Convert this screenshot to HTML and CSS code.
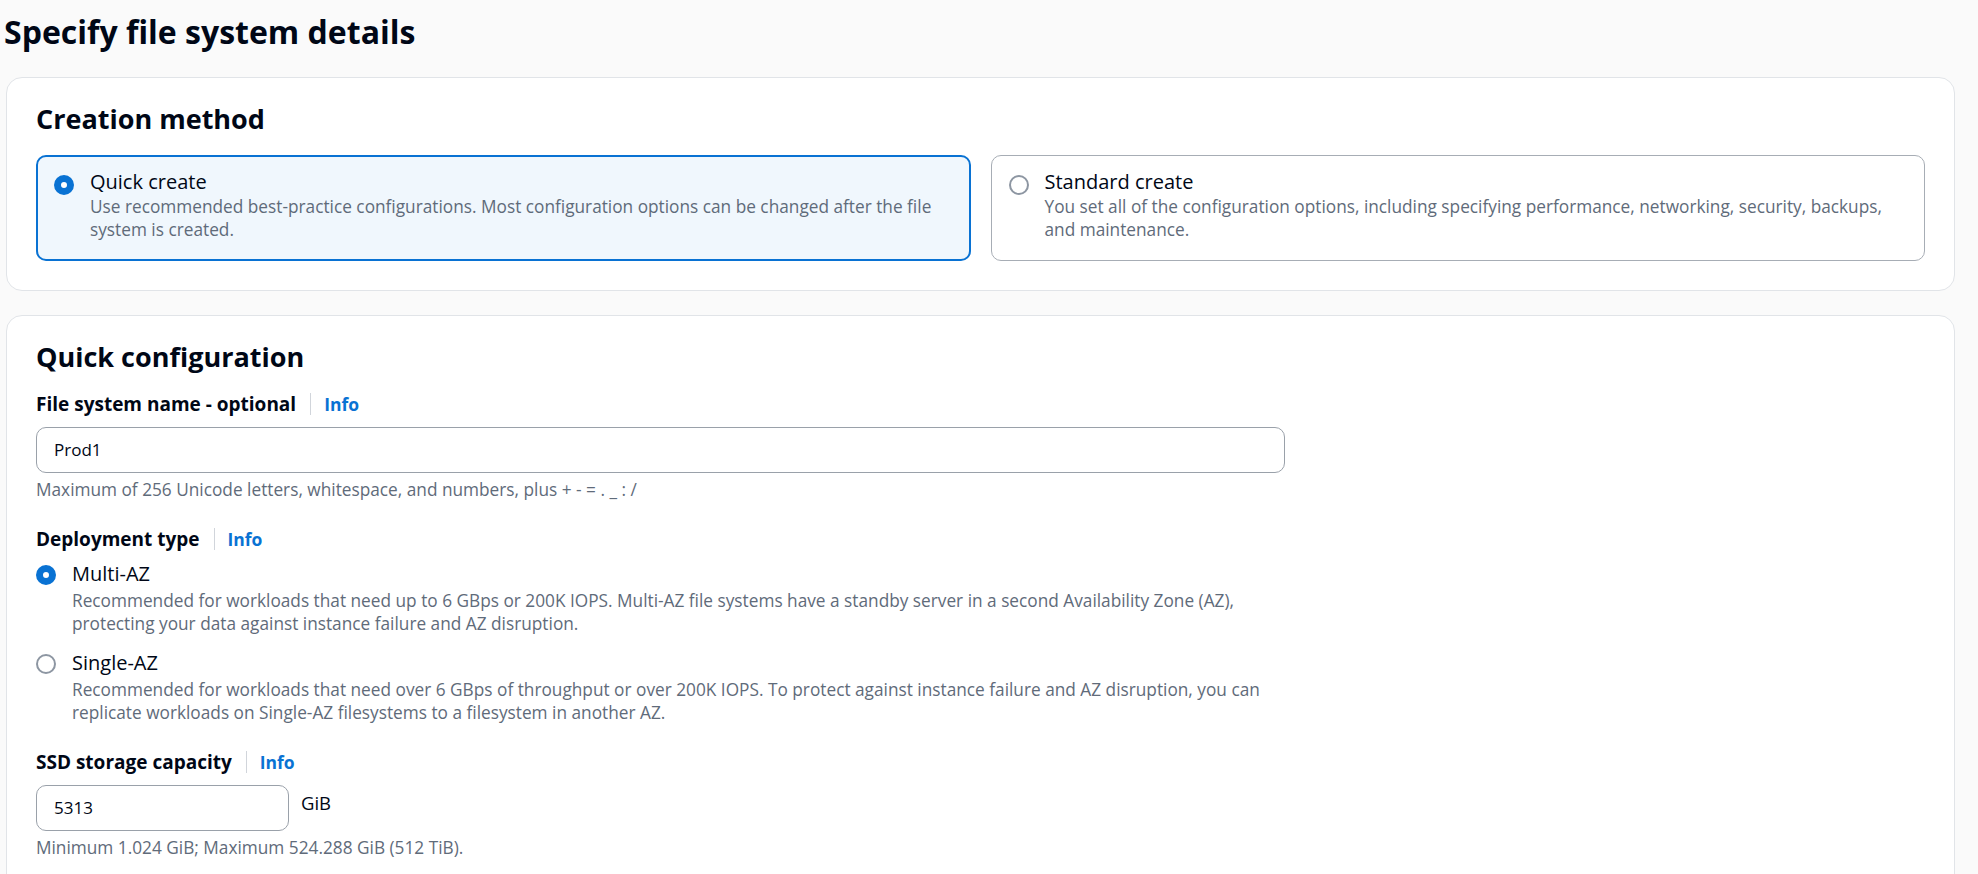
FILE: index.html
```html
<!DOCTYPE html>
<html lang="en">
<head>
    <meta charset="UTF-8">
    <meta name="viewport" content="width=device-width, initial-scale=1.0">
    <title>Specify file system details</title>
    <link rel="stylesheet" href="styles.css">
</head>
    <body>
        <div class="page">

            <h1>Specify file system details</h1>

            <!-- 생성 방식 -->
            <div class="container">
                <h2>Creation method</h2>
                <div class="tiles">
                    <label class="tile selected">
                        <input type="radio" class="radio" name="method" checked>
                        <span class="option-text">
                            <span class="option-label">Quick create</span>
                            <span class="option-desc">Use recommended best-practice configurations. Most configuration options can be changed after the file system is created.</span>
                        </span>
                    </label>
                    <label class="tile">
                        <input type="radio" class="radio" name="method">
                        <span class="option-text">
                            <span class="option-label">Standard create</span>
                            <span class="option-desc">You set all of the configuration options, including specifying performance, networking, security, backups, and maintenance.</span>
                        </span>
                    </label>
                </div>
            </div>

            <!-- 빠른 구성 -->
            <div class="container last">
                <h2>Quick configuration</h2>

                <div class="form">
                    <div class="field">
                        <div class="field-label">File system name - optional <a class="info" href="#">Info</a></div>
                        <input type="text" class="text-input" value="Prod1">
                        <p class="help">Maximum of 256 Unicode letters, whitespace, and numbers, plus + - = . _ : /</p>
                    </div>

                    <div class="field">
                        <div class="field-label">Deployment type <a class="info" href="#">Info</a></div>
                        <div class="radio-group">
                            <label class="option">
                                <input type="radio" class="radio" name="deploy" checked>
                                <span class="option-text">
                                    <span class="option-label">Multi-AZ</span>
                                    <span class="option-desc">Recommended for workloads that need up to 6 GBps or 200K IOPS. Multi-AZ file systems have a standby server in a second Availability Zone (AZ), protecting your data against instance failure and AZ disruption.</span>
                                </span>
                            </label>
                            <label class="option">
                                <input type="radio" class="radio" name="deploy">
                                <span class="option-text">
                                    <span class="option-label">Single-AZ</span>
                                    <span class="option-desc">Recommended for workloads that need over 6 GBps of throughput or over 200K IOPS. To protect against instance failure and AZ disruption, you can replicate workloads on Single-AZ filesystems to a filesystem in another AZ.</span>
                                </span>
                            </label>
                        </div>
                    </div>

                    <div class="field">
                        <div class="field-label">SSD storage capacity <a class="info" href="#">Info</a></div>
                        <div class="unit-row">
                            <input type="text" class="text-input small" value="5313">
                            <span class="unit">GiB</span>
                        </div>
                        <p class="help">Minimum 1.024 GiB; Maximum 524.288 GiB (512 TiB).</p>
                    </div>
                </div>
            </div>

        </div>
    </body>
</html>
```

FILE: styles.css
```css
body {
    margin: 0;
    background-color: #fafafa;
    font-family: "Open Sans", "Noto Sans", sans-serif;
    color: #000716;
}

.page {
    padding: 14px 23px 0 4px;
}

h1 {
    margin: 0;
    font-size: 32px;
    line-height: 36px;
    font-weight: 700;
}

/* 카드 */
.container {
    margin: 27px 0 0 2px;
    background-color: #fff;
    border: 1px solid #e1e4e8;
    border-radius: 16px;
    padding: 25px 29px 29px 29px;
}

.container.last {
    margin-top: 24px;
    padding-bottom: 60px;
}

h2 {
    margin: 0 0 20px;
    font-size: 27px;
    line-height: 32px;
    font-weight: 700;
}

.tiles {
    display: grid;
    grid-template-columns: 1fr 1fr;
    gap: 20px;
}

.tile {
    display: flex;
    gap: 16px;
    border: 1px solid #a7adb5;
    border-radius: 10px;
    padding: 13px 20px 19px 17px;
    cursor: pointer;
}

.tile.selected {
    border: 2px solid #0972d3;
    background-color: #f0f7fd;
    padding: 12px 19px 18px 16px;
}

/* 라디오 버튼 */
.radio {
    appearance: none;
    flex: none;
    box-sizing: border-box;
    width: 20px;
    height: 20px;
    margin: 4px 0 0;
    border: 2px solid #8d96a2;
    border-radius: 50%;
    background-color: #fff;
}

.tile .radio {
    margin-top: 5.5px;
}

.radio:checked {
    border: 7px solid #0972d3;
}

.option-text {
    display: flex;
    flex-direction: column;
}

.option-label {
    font-size: 20px;
    line-height: 26px;
}

.option-desc {
    font-size: 17.25px;
    line-height: 23px;
    color: #5f6b7a;
}

/* 입력 폼 */
.form {
    max-width: 1249px;
    margin-top: 2px;
}

.field {
    margin-bottom: 27px;
}

.field-label {
    display: flex;
    align-items: center;
    font-size: 19px;
    line-height: 22px;
    font-weight: 700;
    margin-bottom: 11.5px;
}

.info {
    margin-left: 14px;
    padding-left: 13px;
    border-left: 1px solid #d1d5db;
    font-size: 17.5px;
    line-height: 22px;
    color: #0972d3;
    text-decoration: none;
}

.text-input {
    display: block;
    box-sizing: border-box;
    width: 100%;
    height: 46px;
    padding: 0 17px;
    border: 1px solid #9aa1aa;
    border-radius: 10px;
    font-family: inherit;
    font-size: 17px;
    color: #000716;
    background-color: #fff;
}

.text-input.small {
    width: 253px;
}

.help {
    margin: 5px 0 0;
    font-size: 17.25px;
    line-height: 23px;
    color: #5f6b7a;
}

.radio-group {
    display: flex;
    flex-direction: column;
    gap: 15px;
}

.radio-group .option-desc {
    margin-top: 2px;
}

.option {
    display: flex;
    gap: 16px;
    cursor: pointer;
}

.unit-row {
    display: flex;
    align-items: flex-start;
    gap: 12px;
}

.unit {
    padding-top: 6.5px;
    font-size: 18.5px;
    line-height: 23px;
}
```
